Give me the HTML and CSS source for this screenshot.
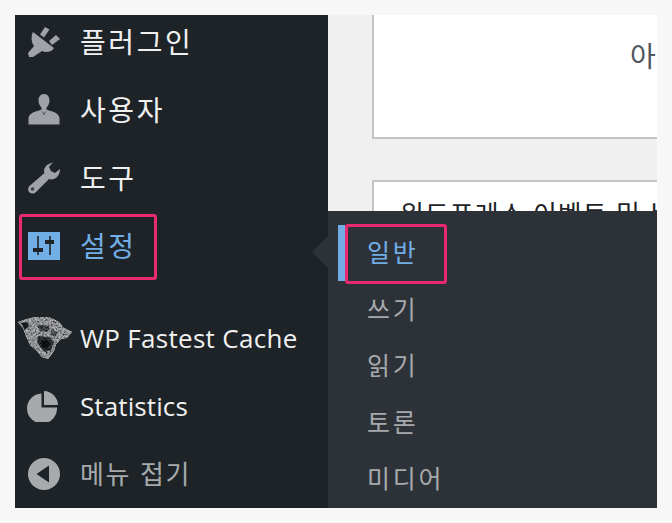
FILE: index.html
```html
<!DOCTYPE html>
<html lang="ko">
<head>
<meta charset="utf-8">
<title>설정</title>
<link rel="stylesheet" href="styles.css">
</head>
<body>
<div class="stage">
  <nav class="sidebar">
    <a class="item ko first">
      <svg class="icon" viewBox="0 0 32 32"><path d="M17 1l4.500 2.500L16 11.500 12 8.500zM28 9l4 4-8 6-3-4z" fill="#9fa2a6"/><path d="M5 6l21 16c-2 4-8 5-12 3l-9 6H1l-1-4 6-7C3 16 3 10 5 6z" fill="#9fa2a6"/></svg>
      <span>플러그인</span>
    </a>
    <a class="item ko">
      <svg class="icon" viewBox="0 0 32 32"><path d="M16 0c3.800 0 5.500 3 5.500 6.500 0 3-1.300 5.500-3 7v2c1.500.8 3.500 1 6 2 3.500 1.300 6.500 3 7 6.500v6.500H.5V24c.5-3.500 3.500-5.200 7-6.500 2.500-1 4.500-1.200 6-2v-2c-1.700-1.500-3-4-3-7C10.500 3 12.200 0 16 0z" fill="#9fa2a6"/><path d="M13 16.500l3 2.500 3-2.500-3 5z" fill="#5c6064"/></svg>
      <span>사용자</span>
    </a>
    <a class="item ko">
      <svg class="icon" viewBox="0 0 32 32"><path d="M25 0l-6 3c-3 3-3.500 6-2.500 8L1.500 24c-2 2-1.500 5 0 6.500 2 1.500 4.500 1.500 6.500-.5l13-13c3 1 6 0 8-2 2-2 3-5 3-8l-5 4-4-2-2-4z" fill="#9fa2a6"/><circle cx="4.500" cy="27" r="1.800" fill="#3d4145"/></svg>
      <span>도구</span>
    </a>
    <a class="item ko active">
      <svg class="icon square" viewBox="0 0 32 28"><rect width="32" height="28" fill="#72aee6"/><path d="M9.200 4h1.600v19H9.200zM21.200 4h1.600v19h-1.600z" fill="#1d2327"/><path d="M5 16h10v4H5zM17 8h9v4h-9z" fill="#1d2327"/></svg>
      <span>설정</span>
    </a>
    <a class="item en cache">
      <svg class="cat" viewBox="0 0 56 44">
        <defs>
          <filter id="fur" x="0" y="0" width="100%" height="100%">
            <feTurbulence type="fractalNoise" baseFrequency="0.55" numOctaves="2" seed="7" result="n"/>
            <feColorMatrix in="n" type="matrix" values="1.600 0 0 0 -0.300  1.600 0 0 0 -0.300  1.600 0 0 0 -0.300  0 0 0 0 1" result="g"/>
            <feComposite in="g" in2="SourceAlpha" operator="in" result="t"/>
            <feBlend in="SourceGraphic" in2="t" mode="multiply"/>
          </filter>
        </defs>
        <g filter="url(#fur)">
          <path d="M1 6l9-3 8-2 14 0 10 5 5 6 8 4-5 6-6 1-5 5-2 7-6 8-6-2-5-6-7-6-4-9-3-8z" fill="#c4c6c8"/>
          <path d="M4 7l6-1 2 4-4 4z" fill="#26292c"/>
          <path d="M20 9l9 0 4 3-3 4-7-1z" fill="#55595c"/>
          <path d="M21 20l11 1 5 5-3 8-6 2-5-5-3-6z" fill="#3c4043"/>
          <path d="M24 24l7 1 2 3-3 5-5-2z" fill="#17191b"/>
          <path d="M34 13l7 3-3 5-4-2z" fill="#6b6f72"/>
        </g>
      </svg>
      <span>WP Fastest Cache</span>
    </a>
    <a class="item en stats">
      <svg class="icon pie" viewBox="0 0 32 32"><path d="M14.500 3.500V17.500H30A15 15 0 1 1 14.500 3.500z" fill="#a7aaad"/><path d="M17 1A14.500 14.500 0 0 1 31 15H17z" fill="#a7aaad"/></svg>
      <span>Statistics</span>
    </a>
    <a class="item ko collapse">
      <svg class="icon" viewBox="0 0 32 32"><circle cx="16" cy="16" r="16" fill="#a7aaad"/><path d="M21 7.500v17L8.500 16z" fill="#1d2327"/></svg>
      <span>메뉴 접기</span>
    </a>
    <i class="mark mark-main"></i>
  </nav>
  <main class="content">
    <section class="card card-one"><p>아이디어</p></section>
    <section class="card card-two"><p>워드프레스 이벤트 및 뉴스</p></section>
  </main>
  <div class="flyout">
    <i class="arrow"></i>
    <a class="sub current">일반</a>
    <a class="sub">쓰기</a>
    <a class="sub">읽기</a>
    <a class="sub">토론</a>
    <a class="sub">미디어</a>
    <i class="mark mark-sub"></i>
  </div>
</div>
</body>
</html>
```
FILE: styles.css
```css
* { box-sizing: border-box; }
html, body { margin: 0; height: 100%; }
body {
  background: #f7f7f7;
  padding: 15px;
  overflow: hidden;
  font-family: "Noto Sans CJK KR", "Open Sans", sans-serif;
}
.stage {
  position: relative;
  width: 642px;
  height: 493px;
  display: flex;
  overflow: hidden;
  background: #f0f0f1;
}
.sidebar {
  position: relative;
  width: 313px;
  flex: none;
  background: #1d2327;
  display: flex;
  flex-direction: column;
}
.item {
  height: 68px;
  display: flex;
  align-items: center;
  padding-left: 13px;
  color: #f0f0f1;
  flex: none;
}
.first { margin-top: -7px; }
.ko span { font-size: 28px; line-height: 1; margin: 0 0 2px 20px; letter-spacing: 2.6px; }
.en span { font-family: "Open Sans", sans-serif; font-size: 26px; line-height: 1; margin-left: 20px; letter-spacing: 0.3px; }
.stats span { letter-spacing: 0.1px; }
.icon { width: 32px; height: 32px; flex: none; }
.square { height: 28px; }
.active span { color: #72aee6; }
.cache { margin-top: 24px; padding-left: 2px; }
.cache span { margin-left: 7px; }
.cat { width: 56px; height: 44px; flex: none; }
.pie { margin-left: -1px; margin-right: 1px; }
.collapse span { color: #a7aaad; letter-spacing: 1.6px; font-size: 26px; }
.mark {
  position: absolute;
  border: 3px solid #e92a6e;
  border-radius: 3px;
  display: block;
}
.mark-main { left: 4px; top: 199px; width: 138px; height: 66px; }
.content {
  flex: 1;
  padding-left: 44px;
  min-width: 0;
  display: flex;
  flex-direction: column;
  gap: 41px;
}
.card {
  background: #fff;
  border: 2px solid #c3c4c7;
  border-right: 0;
  flex: none;
  width: 100%;
  overflow: hidden;
}
.card-one {
  height: 124px;
  border-top: 0;
  display: flex;
  justify-content: flex-end;
  overflow: hidden;
}
.card-one p {
  margin: 23px -56px 0 0;
  font-size: 28px;
  line-height: 34px;
  color: #50575e;
  white-space: nowrap;
  width: 83px;
  flex: none;
}
.card-two { height: 120px; }
.card-two p {
  margin: 16px 0 0 26px;
  font-size: 26px;
  line-height: 30px;
  letter-spacing: 1px;
  color: #1d2327;
  white-space: nowrap;
}
.flyout {
  position: absolute;
  left: 313px;
  top: 196px;
  width: 329px;
  height: 297px;
  background: #2d3239;
  display: flex;
  flex-direction: column;
  padding: 13px 0 0 10px;
}
.arrow {
  position: absolute;
  left: -16px;
  top: 25px;
  width: 0;
  height: 0;
  border: 16px solid transparent;
  border-left: 0;
  border-right-color: #2d3239;
}
.sub {
  height: 56.5px;
  padding-left: 22px;
  border-left: 7px solid transparent;
  font-size: 25px;
  line-height: 55px;
  letter-spacing: 2.8px;
  color: #a7aaad;
  flex: none;
}
.current { color: #72aee6; border-left-color: #72aee6; margin-top: 1px; height: 55.500px; line-height: 53px; }
.mark-sub { left: 17px; top: 13px; width: 102px; height: 60px; }
```
